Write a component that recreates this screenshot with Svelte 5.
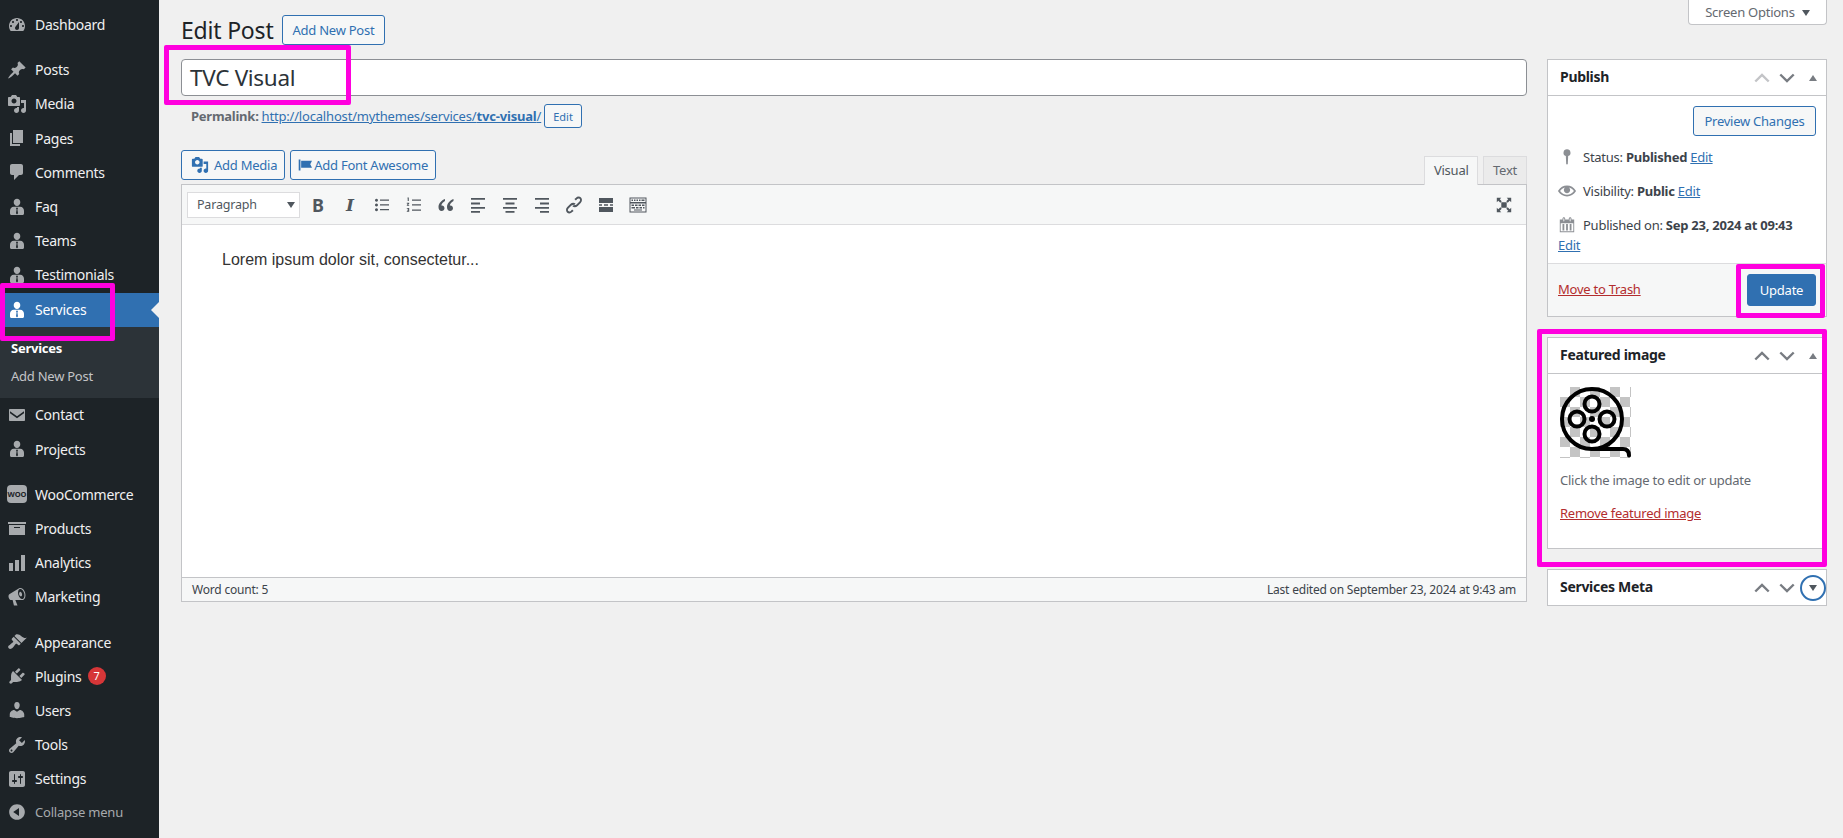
<script>
  const man = 'M10 1.8c1.9 0 3.3 1.5 3.3 3.4S11.9 9 10 9 6.7 7.1 6.7 5.2 8.1 1.8 10 1.8zM6.8 9.8h6.400c2.300 0 3.800 1.700 3.800 4v2.700c0 .9-.6 1.500-1.500 1.500H4.500c-.9 0-1.500-.6-1.500-1.500v-2.700c0-2.300 1.500-4 3.800-4zM10 10.300l-1 1.300.6 1-.6 3.600 1 1.300 1-1.300-.6-3.600.6-1z';
  const media = 'M13 11V4c0-.55-.45-1-1-1h-1.670L9 1H5L3.670 3H2c-.55 0-1 .45-1 1v7c0 .55.45 1 1 1h10c.55 0 1-.45 1-1zM7 4.500c1.380 0 2.500 1.120 2.500 2.500S8.380 9.500 7 9.500 4.500 8.380 4.500 7 5.620 4.500 7 4.500zM14 6h5v10.500c0 1.380-1.120 2.500-2.500 2.500S14 17.880 14 16.500s1.120-2.500 2.500-2.500c.17 0 .34.02.5.05V9h-3V6zm-4 8.050V13h2v3.500c0 1.380-1.120 2.500-2.500 2.500S7 17.880 7 16.500 8.120 14 9.500 14c.17 0 .34.02.5.05z';

  const menu = [
    { label: 'Dashboard', d: 'M3.760 16h12.480c1.100-1.370 1.760-3.110 1.760-5 0-4.420-3.580-8-8-8s-8 3.580-8 8c0 1.890.66 3.630 1.760 5zM10 4c.55 0 1 .45 1 1s-.45 1-1 1-1-.45-1-1 .45-1 1-1zM6 6c.55 0 1 .45 1 1s-.45 1-1 1-1-.45-1-1 .45-1 1-1zm8 0c.55 0 1 .45 1 1s-.45 1-1 1-1-.45-1-1 .45-1 1-1zm-5.370 5.550L12 7v6c0 1.100-.9 2-2 2s-2-.9-2-2c0-.57.24-1.080.63-1.450zM4 10c.55 0 1 .45 1 1s-.45 1-1 1-1-.45-1-1 .45-1 1-1zm12 0c.55 0 1 .45 1 1s-.45 1-1 1-1-.45-1-1 .45-1 1-1z' },
    { label: 'Posts', gap: true, d: 'M10.440 3.020l1.820-1.820 6.360 6.350-1.830 1.820c-1.050-.68-2.480-.57-3.410.36l-.75.75c-.92.93-1.040 2.350-.35 3.410l-1.830 1.820-2.410-2.410-2.800 2.790c-.42.42-3.380 2.710-3.800 2.290s1.860-3.390 2.280-3.810l2.790-2.790L4.100 9.360l1.830-1.820c1.050.69 2.480.57 3.400-.36l.75-.75c.93-.92 1.050-2.350.36-3.410z' },
    { label: 'Media', d: media },
    { label: 'Pages', d: 'M6 15V2h10v13H6zm-1 1h8v2H3V5h2v11z' },
    { label: 'Comments', d: 'M5 2h9c1.100 0 2 .9 2 2v7c0 1.100-.9 2-2 2h-2l-5 5v-5H5c-1.100 0-2-.9-2-2V4c0-1.100.9-2 2-2z' },
    { label: 'Faq', d: man },
    { label: 'Teams', d: man },
    { label: 'Testimonials', d: man },
    { label: 'Services', d: man, active: true },
    { label: 'Contact', d: 'M3 4h14c.55 0 1 .45 1 1v10c0 .55-.45 1-1 1H3c-.55 0-1-.45-1-1V5c0-.55.45-1 1-1zm14 2.200l-7 5-7-5v2l7 5 7-5z' },
    { label: 'Projects', d: man },
    { label: 'WooCommerce', gap: true, woo: true },
    { label: 'Products', d: 'M19 4v2H1V4h18zM2 7h16v10H2V7zm11 3V9H7v1h6z' },
    { label: 'Analytics', d: 'M18 18V2h-4v16h4zm-6 0V7H8v11h4zm-6 0v-8H2v8h4z' },
    { label: 'Marketing', d: 'M18.150 5.940c.46 1.620.38 3.220-.02 4.480-.42 1.280-1.260 2.180-2.300 2.480-.16.06-.26.06-.4.06-.06.02-.12.02-.18.02-.06.02-.14.02-.22.02H8.300l2.220 5.500H6.950l-1.340-5.500H4.250c-.5.06-1.080-.18-1.540-.62s-.88-1.080-1.060-1.880c-.24-.8-.2-1.560-.02-2.200.18-.62.58-1.080 1.060-1.300l9.020-5.420c.33-.22.5-.32.98-.46 1.040-.3 2.240.1 3.220 1 .98.88 1.840 2.240 2.260 3.860zm-2.600 5.980c.4-.1.74-.34 1.040-.7.58-.7.860-1.760.86-3.040-.02-.64-.1-1.300-.28-1.980-.34-1.360-1.020-2.500-1.780-3.240s-1.680-1.100-2.460-.88c-.82.22-1.400.96-1.700 2-.32 1.040-.28 2.360.06 3.720.38 1.360 1 2.500 1.800 3.240.78.74 1.620 1.100 2.460.88zm-2.520-7.080c.22-.04.42-.02.62.04.38.16.76.48 1.020 1s.42 1.200.42 1.780c0 .3-.04.56-.12.8-.18.48-.44.84-.86.94-.34.12-.68-.02-1.040-.3-.34-.28-.68-.78-.86-1.400-.16-.6-.18-1.200-.02-1.700s.4-.88.84-1.160z' },
    { label: 'Appearance', gap: true, d: 'M14.480 11.060L7.410 3.990l1.500-1.500c.5-.56 2.300-.47 3.510.32 1.210.8 1.430 1.280 2.910 2.100 1.180.64 2.450 1.260 4.450.85zm-.71.71L6.700 4.700 4.930 6.470c-.39.39-.39 1.020 0 1.410l1.060 1.060c.39.39.39 1.030 0 1.420-.6.6-1.430 1.110-2.210 1.690-.35.26-.7.53-1.010.84C1.430 13.230.4 14.980 1.720 16.300c1.330 1.330 3.080.3 4.420-1.050.31-.31.58-.66.85-1.020.57-.78 1.080-1.610 1.690-2.210.39-.39 1.020-.39 1.410 0l1.060 1.060c.39.39 1.020.39 1.410 0z' },
    { label: 'Plugins', badge: 7, d: 'M13.110 4.360L9.870 7.600 8 5.730l3.240-3.240c.35-.34 1.050-.2 1.560.32.52.51.66 1.210.31 1.550zm-8 1.770l.91-1.120 9.010 9.010-1.190.84c-.71.71-2.630 1.160-3.820 1.160H6.140L4.900 17.260c-.59.59-1.540.59-2.120 0-.59-.58-.59-1.530 0-2.120l1.240-1.240v-3.880c0-1.130.4-3.190 1.090-3.890zm7.260 3.970l3.240-3.240c.34-.35 1.040-.21 1.550.31.52.51.66 1.210.31 1.550l-3.240 3.250z' },
    { label: 'Users', d: 'M10 9.250c-2.270 0-2.730-3.440-2.730-3.440C7 4.020 7.820 2 9.970 2c2.160 0 2.980 2.020 2.710 3.810 0 0-.41 3.440-2.680 3.440zm0 2.570L12.720 10c2.390 0 4.520 2.330 4.520 4.530v2.490s-3.650 1.130-7.240 1.130c-3.650 0-7.240-1.130-7.240-1.130v-2.490c0-2.250 1.940-4.480 4.470-4.480z' },
    { label: 'Tools', d: 'M16.680 9.770c-1.340 1.340-3.300 1.670-4.950.99l-5.410 6.520c-.99.99-2.590.99-3.580 0s-.99-2.590 0-3.570l6.520-5.420c-.68-1.650-.35-3.610.99-4.950 1.280-1.280 3.120-1.620 4.720-1.060l-2.890 2.890 2.820 2.820 2.860-2.870c.53 1.580.18 3.390-1.080 4.650zM3.810 16.210c.4.39 1.040.39 1.430 0 .4-.4.4-1.040 0-1.430-.39-.4-1.030-.4-1.430 0-.39.39-.39 1.030 0 1.430z' },
    { label: 'Settings', d: 'M18 16V4c0-1.100-.9-2-2-2H4c-1.100 0-2 .9-2 2v12c0 1.100.9 2 2 2h12c1.100 0 2-.9 2-2zM8 11h1c.55 0 1 .45 1 1s-.45 1-1 1H8v1.500c0 .28-.22.5-.5.5s-.5-.22-.5-.5V13H6c-.55 0-1-.45-1-1s.45-1 1-1h1V5.500c0-.28.22-.5.5-.5s.5.22.5.5V11zm5-2h-1c-.55 0-1-.45-1-1s.45-1 1-1h1V5.500c0-.28.22-.5.5-.5s.5.22.5.5V7h1c.55 0 1 .45 1 1s-.45 1-1 1h-1v5.500c0 .28-.22.5-.5.5s-.5-.22-.5-.5V9z' }
  ];

  // toolbar icons after B and I, left to right
  const tools = [
    'M4.500 3.800a1.500 1.500 0 1 1-.01 0zM4.500 8.500a1.500 1.500 0 1 1-.01 0zM4.500 13.200a1.500 1.500 0 1 1-.01 0zM8 4.500h9v1.300H8zM8 9.200h9v1.300H8zM8 13.900h9v1.300H8z',
    'M3.500 2.500h1.300v3.600H3.700V3.600h-.2zM2.800 7.800h2.400v1l-1.200 1.200h1.200v.8H2.800v-.9L4 8.700H2.800zM2.800 13h2.400v3.800H2.800V16h1.300v-.6H3v-.7h1.100v-.9H2.800zM8 4.500h9v1.300H8zM8 9.200h9v1.300H8zM8 14.500h9v1.300H8z',
    'M9 4C5.400 5.400 2.500 8.300 2.500 12c0 2.400 1.300 4 3.100 4 1.600 0 2.900-1.200 2.900-2.800 0-1.500-1.100-2.700-2.500-2.700-.3 0-.5 0-.7.1.3-1.700 1.700-3.400 3.700-4.500zM17.500 4c-3.600 1.400-6.500 4.300-6.500 8 0 2.400 1.300 4 3.100 4 1.600 0 2.900-1.200 2.900-2.800 0-1.500-1.100-2.700-2.500-2.700-.3 0-.5 0-.7.1.3-1.700 1.700-3.400 3.700-4.500z',
    'M3 3h14v1.800H3zM3 7.600h9v1.800H3zM3 12h14v1.800H3zM3 16h9v1.800H3z',
    'M3 3h14v1.800H3zM5.500 7.600h9v1.800h-9zM3 12h14v1.800H3zM5.500 16h9v1.800h-9z',
    'M3 3h14v1.800H3zM8 7.600h9v1.800H8zM3 12h14v1.800H3zM8 16h9v1.800H8z',
    'M11.700 2.900c1.700-1.700 4-1.600 5.300-.3s1.400 3.600-.3 5.300l-3 3c-1.700 1.700-4 1.600-5.300.3l1.600-1.600c.6.6 1.700.6 2.500-.2l3-3c.8-.8.8-1.900.2-2.500s-1.700-.6-2.500.2l-1.300 1.300-1.500-1.300zM8.300 17.100c-1.700 1.700-4 1.600-5.300.3s-1.400-3.600.3-5.300l3-3c1.700-1.700 4-1.600 5.300-.3l-1.600 1.600c-.6-.6-1.700-.6-2.500.2l-3 3c-.8.8-.8 1.900-.2 2.500s1.700.6 2.500-.2l1.300-1.300 1.500 1.300z',
    'M3 3h14v5H3zM3 9.300h3v1.400H3zM8 9.300h4v1.400H8zM14 9.300h3v1.400h-3zM3 12h14v5H3z',
    'M1.500 2.500h17v15h-17zM2.500 3.500v3.500h15V3.500zM3.500 4.500h1.500v1.500H3.500zM6 4.500h1.500v1.500H6zM8.500 4.500H10v1.500H8.500zM11 4.500h1.500v1.500H11zM13.500 4.500h3v1.500h-3zM2.500 8.500v8h15v-8zM3.500 9.500h2.500v1.500H3.500zM7 9.500h2.500v1.500H7zM10.500 9.500H13v1.500h-2.500zM14 9.500h2.500v1.500H14zM3.500 12h3.500v1.500H3.500zM8 12h2.500v1.500H8zM11.500 12H14v1.500h-2.500zM15 12h1.500v1.500H15zM6 14.500h8v1H6z'
  ];

  const boxes = [
    { title: 'Publish', key: 'publish' },
    { title: 'Featured image', key: 'image' },
    { title: 'Services Meta', key: 'meta' }
  ];
</script>

<div class="page">
  <nav class="sidebar">
    <ul class="menu">
      {#each menu as item}
        <li class="item" class:gap={item.gap} class:active={item.active}>
          {#if item.woo}
            <span class="woo"><span>Woo</span></span>
          {:else}
            <svg class="icon" viewBox="0 0 20 20"><path fill-rule="evenodd" d={item.d} /></svg>
          {/if}
          <span>{item.label}</span>
          {#if item.badge}<span class="badge">{item.badge}</span>{/if}
        </li>
        {#if item.active}
          <li class="submenu">
            <div class="sub current">Services</div>
            <div class="sub">Add New Post</div>
          </li>
        {/if}
      {/each}
      <li class="collapse">
        <svg class="icon" viewBox="0 0 20 20"><path d="M10 2.160c4.330 0 7.840 3.510 7.840 7.840s-3.510 7.840-7.840 7.840S2.160 14.330 2.160 10 5.710 2.160 10 2.160zm2 11.720V6.120L6.180 9.970z" /></svg>
        <span>Collapse menu</span>
      </li>
    </ul>
  </nav>

  <main class="content">
    <button class="screen-options">Screen Options <i class="down"></i></button>

    <div class="heading">
      <h1>Edit Post</h1>
      <button class="btn">Add New Post</button>
    </div>

    <div class="columns">
      <div class="left">
        <div class="title-input">TVC Visual</div>
        <div class="permalink">
          <strong>Permalink:</strong>
          <a href="#top">http://localhost/mythemes/services/<b>tvc-visual</b>/</a>
          <button class="btn tiny">Edit</button>
        </div>

        <div class="editor-top">
          <div class="media-btns">
            <button class="btn add-media">
              <svg viewBox="0 0 20 20"><path d={media} /></svg>
              Add Media
            </button>
            <button class="btn flag">
              <svg viewBox="0 0 20 20"><path d="M1 2h2.500v16H1zM4.500 4H20l-2.500 5 2.500 5H4.500z" /></svg>
              Add Font Awesome
            </button>
          </div>
          <div class="tabs">
            <span class="tab on">Visual</span>
            <span class="tab">Text</span>
          </div>
        </div>

        <div class="editor">
          <div class="toolbar">
            <div class="select">Paragraph <i class="down"></i></div>
            <span class="tool letter bold">B</span>
            <span class="tool letter italic">I</span>
            {#each tools as d}
              <svg class="tool" viewBox="0 0 20 20"><path fill-rule="evenodd" d={d} /></svg>
            {/each}
            <svg class="fullscreen" viewBox="0 0 20 20"><path d="M7 7h6v6H7zM2 2h5L5.300 3.700 7.500 5.900 5.900 7.500 3.700 5.300 2 7zM18 2v5l-1.700-1.700-2.200 2.200-1.600-1.600 2.200-2.200L13 2zM2 18v-5l1.700 1.700 2.200-2.200 1.600 1.600-2.200 2.200L7 18zM18 18h-5l1.700-1.700-2.200-2.200 1.600-1.600 2.200 2.200L18 13z" /></svg>
          </div>
          <div class="body-text">Lorem ipsum dolor sit, consectetur...</div>
          <div class="statusbar">
            <span>Word count: 5</span>
            <span>Last edited on September 23, 2024 at 9:43 am</span>
          </div>
        </div>
      </div>

      <aside class="right">
        {#each boxes as box}
          <section class="box">
            <header class="box-head">
              <h2>{box.title}</h2>
              <svg class="handle" class:dim={box.key === 'publish'} viewBox="0 0 20 20"><path d="M3.300 13.500l6.700-6.500 6.700 6.500" /></svg>
              <svg class="handle next" viewBox="0 0 20 20"><path d="M3.300 6.500l6.700 6.500 6.700-6.500" /></svg>
              <span class="toggle" class:focus={box.key === 'meta'}>
                <i class:up={box.key !== 'meta'} class:down={box.key === 'meta'}></i>
              </span>
            </header>

            {#if box.key === 'publish'}
              <div class="preview-row"><button class="btn">Preview Changes</button></div>
              <div class="misc">
                <svg viewBox="0 0 20 20" class="pin"><path d="M10 1.500a3.800 3.800 0 0 1 1.300 7.400L10.900 17.800c0 .7-1.800.7-1.800 0L8.700 8.900A3.800 3.800 0 0 1 10 1.500z" /></svg>
                <span>Status: <b>Published</b> <a href="#top">Edit</a></span>
              </div>
              <div class="misc">
                <svg viewBox="0 0 20 20"><path d="M19.700 9.400C17.700 6 14 3.900 10 3.900S2.300 6 .3 9.400L0 10l.3.6c2 3.400 5.700 5.500 9.700 5.500s7.700-2.100 9.700-5.500l.3-.6-.3-.6zM10 14.100c-3.100 0-6-1.600-7.700-4.100C3.600 8 5.700 6.600 8 6.100c-.9.6-1.500 1.700-1.500 2.900 0 1.900 1.600 3.500 3.500 3.500s3.500-1.600 3.500-3.500c0-1.200-.6-2.300-1.500-2.900 2.300.5 4.400 1.900 5.700 3.900-1.700 2.500-4.600 4.100-7.700 4.100z" /></svg>
                <span>Visibility: <b>Public</b> <a href="#top">Edit</a></span>
              </div>
              <div class="misc stamp">
                <svg viewBox="0 0 20 20"><path d="M15 4h3v14H2V4h3V3c0-.83.67-1.500 1.500-1.500S8 2.170 8 3v1h4V3c0-.83.67-1.500 1.500-1.500S15 2.170 15 3v1zM6 3v2.500c0 .28.22.5.5.5S7 5.780 7 5.500V3c0-.28-.22-.5-.5-.5S6 2.720 6 3zm7 0v2.500c0 .28.22.5.5.5s.5-.22.5-.5V3c0-.28-.22-.5-.5-.5S13 2.720 13 3zm4 14V8H3v9h14zM7 16V9H5v7h2zm4 0V9H9v7h2zm4 0V9h-2v7h2z" /></svg>
                <span>Published on: <b>Sep 23, 2024 at 09:43</b></span>
                <a class="stamp-edit" href="#top">Edit</a>
              </div>
              <div class="major">
                <a class="trash" href="#top">Move to Trash</a>
                <button class="btn primary">Update</button>
              </div>
            {:else if box.key === 'image'}
              <div class="image-body">
                <div class="checker">
                  <svg viewBox="0 0 71 71" width="71" height="71">
                    <g fill="none" stroke="#000" stroke-width="4">
                      <circle cx="32" cy="32" r="30" />
                      <circle cx="32" cy="17" r="7.500" />
                      <circle cx="32" cy="47" r="7.500" />
                      <circle cx="17" cy="32" r="7.500" />
                      <circle cx="47" cy="32" r="7.500" />
                      <path d="M32 62h31c4 0 6 2.500 6 6.500" stroke-linecap="round" />
                    </g>
                    <circle cx="32" cy="32" r="3" />
                  </svg>
                </div>
                <p>Click the image to edit or update</p>
                <a class="trash" href="#top">Remove featured image</a>
              </div>
            {/if}
          </section>
        {/each}
      </aside>
    </div>
  </main>

  <div class="mark m-title"></div>
  <div class="mark m-services"></div>
  <div class="mark m-update"></div>
  <div class="mark m-image"></div>
</div>

<style>
  :global(body) {
    margin: 0;
    background: #f0f0f0;
  }

  .page {
    position: relative;
    display: flex;
    height: 838px;
    overflow: hidden;
    font-family: "Noto Sans", sans-serif;
    font-size: 13px;
    color: #3c434a;
  }

  .sidebar {
    width: 159px;
    flex: none;
    background: #1d2327;
    color: #f0f0f1;
  }

  .menu {
    list-style: none;
    margin: 0;
    padding: 7.5px 0 0;
  }

  .item {
    position: relative;
    display: flex;
    align-items: center;
    height: 34.2px;
    padding-left: 7px;
    font-size: 14px;
    letter-spacing: -0.25px;
    box-sizing: border-box;
  }

  .item.gap {
    margin-top: 11px;
  }

  .item.active {
    margin-top: 0.6px;
    background: #3070b1;
    color: #fff;
  }

  .item.active .icon {
    fill: #fff;
  }

  .item.active::after {
    content: "";
    position: absolute;
    right: 0;
    top: 9px;
    border: 8px solid transparent;
    border-right-color: #f0f0f0;
    border-left: 0;
  }

  .icon {
    width: 20px;
    height: 20px;
    margin-right: 8px;
    fill: #a7aaad;
    flex: none;
  }

  .woo {
    width: 20px;
    height: 18px;
    margin-right: 8px;
    background: #a7aaad;
    border-radius: 4px;
    color: #1d2327;
    font-size: 7.5px;
    font-weight: 700;
    display: flex;
    align-items: center;
    justify-content: center;
    letter-spacing: 0;
    flex: none;
    text-transform: uppercase;
  }

  .badge {
    width: 18px;
    height: 18px;
    margin-left: 6px;
    border-radius: 50%;
    background: #d63638;
    color: #fff;
    font-size: 11px;
    text-align: center;
    line-height: 17px;
    letter-spacing: 0;
  }

  .submenu {
    background: #2c3338;
    padding: 7px 0 8px;
    font-size: 13px;
    color: #c3c4c7;
  }

  .sub {
    height: 28px;
    line-height: 28px;
    padding-left: 11px;
    letter-spacing: -0.25px;
  }

  .sub.current {
    color: #fff;
    font-weight: 700;
  }

  .collapse {
    display: flex;
    align-items: center;
    height: 30px;
    margin-top: 1px;
    padding-left: 7px;
    color: #a7aaad;
    font-size: 13px;
    letter-spacing: -0.2px;
  }

  .content {
    position: relative;
    flex: 1;
    min-width: 0;
    padding: 15px 16px 0 22px;
  }

  .screen-options {
    position: absolute;
    top: -1px;
    right: 16px;
    width: 139px;
    height: 26px;
    background: #fff;
    border: 1px solid #c3c4c7;
    border-top: 0;
    border-radius: 0 0 4px 4px;
    color: #646970;
    font: 13px "Noto Sans", sans-serif;
    letter-spacing: -0.25px;
    padding: 0;
  }

  .down,
  .up {
    display: inline-block;
    width: 0;
    height: 0;
    border-left: 4px solid transparent;
    border-right: 4px solid transparent;
  }

  .down {
    border-top: 6px solid #50575e;
  }

  .up {
    border-bottom: 6px solid #787c82;
  }

  .screen-options .down {
    margin-left: 4px;
    vertical-align: 1px;
  }

  .heading {
    display: flex;
    align-items: center;
    gap: 8px;
    height: 29px;
  }

  h1 {
    margin: 0;
    font-size: 23px;
    font-weight: 400;
    color: #1d2327;
    letter-spacing: -0.2px;
  }

  .btn {
    display: inline-flex;
    align-items: center;
    justify-content: center;
    height: 30px;
    padding: 0 10px;
    box-sizing: border-box;
    background: #f6f7f7;
    border: 1px solid #3070b1;
    border-radius: 3px;
    color: #3070b1;
    font: 13px "Noto Sans", sans-serif;
    letter-spacing: -0.25px;
  }

  .columns {
    display: flex;
    gap: 20px;
    margin-top: 15px;
  }

  .left {
    flex: 1;
    min-width: 0;
  }

  .right {
    width: 280px;
    flex: none;
  }

  .title-input {
    height: 37px;
    box-sizing: border-box;
    padding-left: 8px;
    background: #fff;
    border: 1px solid #8c8f94;
    border-radius: 4px;
    color: #2c3338;
    font-size: 22.5px;
    line-height: 35px;
    letter-spacing: -0.3px;
  }

  .permalink {
    display: flex;
    align-items: center;
    gap: 3px;
    height: 24px;
    margin-top: 8px;
    padding-left: 10px;
    font-size: 13px;
    letter-spacing: -0.25px;
    color: #646970;
  }

  .permalink a {
    letter-spacing: -0.18px;
  }

  a {
    color: #3070b1;
    text-decoration: underline;
  }

  .btn.tiny {
    height: 24px;
    padding: 0 8px;
    font-size: 11px;
    letter-spacing: 0;
  }

  .editor-top {
    display: flex;
    justify-content: space-between;
    align-items: flex-end;
    margin-top: 15px;
    height: 41px;
  }

  .media-btns {
    display: flex;
    gap: 5px;
    margin-bottom: 4px;
  }

  .media-btns svg {
    width: 18px;
    height: 18px;
    fill: #3070b1;
    margin-right: 5px;
  }

  .btn.add-media {
    padding: 0 7px 0 9px;
  }

  .btn.flag {
    padding: 0 7px;
  }

  .btn.flag svg {
    width: 14px;
    height: 14px;
    margin-right: 2px;
  }

  .tabs {
    display: flex;
    gap: 5px;
  }

  .tab {
    height: 28px;
    line-height: 27px;
    padding: 0 9px;
    box-sizing: border-box;
    border: 1px solid #dcdcde;
    border-bottom: 0;
    background: #ebebeb;
    color: #646970;
    font-size: 13px;
    letter-spacing: -0.25px;
  }

  .tab.on {
    background: #f6f7f7;
    color: #50575e;
    height: 29px;
    margin-bottom: -1px;
    position: relative;
    z-index: 1;
    padding: 0 8.5px;
  }

  .editor {
    border: 1px solid #c3c4c7;
    background: #fff;
  }

  .toolbar {
    position: relative;
    display: flex;
    align-items: center;
    height: 39px;
    padding-left: 5px;
    background: #f6f7f7;
    border-bottom: 1px solid #dcdcde;
  }

  .select {
    display: flex;
    justify-content: space-between;
    align-items: center;
    width: 113px;
    height: 26px;
    box-sizing: border-box;
    padding: 0 4px 0 9px;
    margin-right: 2px;
    background: #fff;
    border: 1px solid #dcdcde;
    color: #50575e;
    font-size: 12.5px;
    letter-spacing: -0.2px;
  }

  .tool {
    width: 20px;
    height: 20px;
    margin: 0 6px;
    fill: #50575e;
    flex: none;
  }

  .letter {
    text-align: center;
    line-height: 20px;
    color: #50575e;
    font-size: 18px;
    font-weight: 700;
    font-family: "Noto Sans", sans-serif;
  }

  .italic {
    font-style: italic;
    font-size: 17px;
    font-family: "DejaVu Serif", serif;
  }

  .fullscreen {
    position: absolute;
    right: 13px;
    top: 11px;
    width: 18px;
    height: 18px;
    fill: #50575e;
  }

  .body-text {
    height: 353px;
    box-sizing: border-box;
    padding: 26px 0 0 40px;
    font: 16px "Liberation Sans", sans-serif;
    color: #333;
    border-bottom: 1px solid #c3c4c7;
  }

  .statusbar {
    display: flex;
    justify-content: space-between;
    align-items: center;
    height: 23px;
    padding: 0 10px;
    background: #f6f7f7;
    font-size: 12px;
    letter-spacing: -0.2px;
  }

  .box {
    background: #fff;
    border: 1px solid #c3c4c7;
    margin-bottom: 20px;
  }

  .box-head {
    display: flex;
    align-items: center;
    height: 35px;
    padding-left: 12px;
  }

  .box-head h2 {
    flex: 1;
    margin: 0 0 2px;
    font-size: 14px;
    font-weight: 700;
    letter-spacing: -0.3px;
    color: #1d2327;
  }

  .box:not(:last-child) .box-head {
    height: 36px;
    box-sizing: border-box;
    border-bottom: 1px solid #c3c4c7;
  }

  .handle {
    width: 20px;
    height: 20px;
    margin-right: 5px;
    fill: none;
    stroke: #787c82;
    stroke-width: 2.4;
  }

  .handle.next {
    margin-right: 3px;
  }

  .handle.dim {
    stroke: #c3c4c7;
  }

  .toggle {
    display: flex;
    align-items: center;
    justify-content: center;
    width: 26px;
    height: 26px;
    border-radius: 50%;
    box-sizing: border-box;
  }

  .toggle.focus {
    border: 2px solid #3070b1;
  }

  .preview-row {
    display: flex;
    justify-content: flex-end;
    padding: 10px 10px 4px;
  }

  .preview-row .btn {
    padding: 0 10.5px;
  }

  .misc {
    display: flex;
    align-items: center;
    height: 34px;
    padding-left: 10px;
    font-size: 13px;
    letter-spacing: -0.25px;
  }

  .misc svg {
    width: 18px;
    height: 18px;
    margin-right: 7px;
    fill: #8c8f94;
    flex: none;
  }

  .stamp {
    flex-wrap: wrap;
    height: auto;
    padding-top: 7px;
    padding-bottom: 8px;
    line-height: 20px;
    white-space: nowrap;
  }

  .stamp-edit {
    flex-basis: 100%;
  }

  .major {
    display: flex;
    justify-content: space-between;
    align-items: center;
    height: 53px;
    padding: 0 10px;
    box-sizing: border-box;
    background: #f6f7f7;
    border-top: 1px solid #dcdcde;
    letter-spacing: -0.25px;
  }

  .trash {
    color: #b32d2e;
    letter-spacing: -0.25px;
  }

  .major .trash {
    margin-bottom: 2px;
  }

  .btn.primary {
    width: 69px;
    height: 32px;
    background: #3070b1;
    color: #fff;
  }

  .image-body {
    height: 174px;
    padding: 13px 12px 0;
    box-sizing: border-box;
  }

  .checker {
    width: 71px;
    height: 71px;
    background: repeating-conic-gradient(#c4c4c4 0 25%, #fff 0 50%) 0 0 / 20px 20px;
  }

  .checker svg {
    display: block;
  }

  .image-body p {
    margin: 13px 0 15px;
    font-size: 13px;
    line-height: 18px;
    letter-spacing: -0.25px;
    color: #646970;
  }

  .mark {
    position: absolute;
    box-sizing: border-box;
    border: 5px solid #ff00de;
    border-radius: 2px;
    pointer-events: none;
  }

  .m-title {
    left: 164px;
    top: 45px;
    width: 187px;
    height: 60px;
  }

  .m-services {
    left: 0;
    top: 283px;
    width: 115px;
    height: 58px;
  }

  .m-update {
    left: 1736px;
    top: 264px;
    width: 89px;
    height: 54px;
  }

  .m-image {
    left: 1537px;
    top: 329px;
    width: 290px;
    height: 238px;
  }
</style>
